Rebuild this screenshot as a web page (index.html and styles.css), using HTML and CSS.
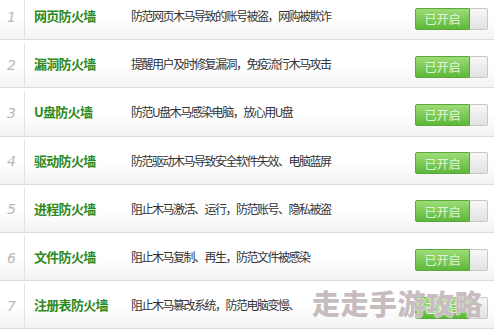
FILE: index.html
```html
<!DOCTYPE html>
<html lang="zh-CN">
<head>
    <meta charset="UTF-8">
    <title>防火墙</title>
    <link rel="stylesheet" href="styles.css">
</head>
<body>
    <div class="list">
        <div class="row">
            <div class="num">1</div>
            <div class="name">网页防火墙</div>
            <div class="desc">防范网页木马导致的账号被盗，网购被欺诈</div>
            <div class="toggle"><span class="on">已开启</span><span class="knob"></span></div>
        </div>
        <div class="row">
            <div class="num">2</div>
            <div class="name">漏洞防火墙</div>
            <div class="desc">提醒用户及时修复漏洞，免疫流行木马攻击</div>
            <div class="toggle"><span class="on">已开启</span><span class="knob"></span></div>
        </div>
        <div class="row">
            <div class="num">3</div>
            <div class="name">U盘防火墙</div>
            <div class="desc">防范U盘木马感染电脑，放心用U盘</div>
            <div class="toggle"><span class="on">已开启</span><span class="knob"></span></div>
        </div>
        <div class="row">
            <div class="num">4</div>
            <div class="name">驱动防火墙</div>
            <div class="desc">防范驱动木马导致安全软件失效、电脑蓝屏</div>
            <div class="toggle"><span class="on">已开启</span><span class="knob"></span></div>
        </div>
        <div class="row">
            <div class="num">5</div>
            <div class="name">进程防火墙</div>
            <div class="desc">阻止木马激活、运行，防范账号、隐私被盗</div>
            <div class="toggle"><span class="on">已开启</span><span class="knob"></span></div>
        </div>
        <div class="row">
            <div class="num">6</div>
            <div class="name">文件防火墙</div>
            <div class="desc">阻止木马复制、再生，防范文件被感染</div>
            <div class="toggle"><span class="on">已开启</span><span class="knob"></span></div>
        </div>
        <div class="row">
            <div class="num">7</div>
            <div class="name">注册表防火墙</div>
            <div class="desc">阻止木马篡改系统，防范电脑变慢、</div>
            <div class="toggle"><span class="on">已开启</span><span class="knob"></span></div>
        </div>
    </div>
    <div class="watermark">走走手游攻略</div>
</body>
</html>
```

FILE: styles.css
```css
* {
    margin: 0;
    padding: 0;
    box-sizing: border-box;
}

body {
    width: 494px;
    height: 330px;
    overflow: hidden;
    background: #fff;
    font-family: "Noto Sans CJK SC", "Liberation Sans", sans-serif;
    position: relative;
}

.list {
    margin-top: -8px;
}

.row {
    display: grid;
    grid-template-columns: 25px 106px 1fr 73px;
    align-items: center;
    height: 48.2px;
    padding-right: 6px;
    border-bottom: 1px solid #dcdcdc;
    background: linear-gradient(#fff 0%, #fff 55%, #f3f3f3 100%);
}

.num {
    align-self: stretch;
    display: flex;
    align-items: center;
    padding-left: 7px;
    margin: 3px 0 1px;
    border-right: 1px solid #e2e2e2;
    font-family: "DejaVu Sans", sans-serif;
    font-style: italic;
    font-size: 14px;
    color: #b8b8b8;
}

.name {
    padding-left: 9px;
    font-size: 13px;
    font-weight: bold;
    color: #2e8a22;
    white-space: nowrap;
    letter-spacing: -0.7px;
}

.desc {
    font-size: 12px;
    color: #333;
    white-space: nowrap;
    letter-spacing: -1.5px;
}

.toggle {
    display: flex;
    height: 22px;
    margin-top: 6px;
}

.on {
    width: 55px;
    display: flex;
    align-items: center;
    justify-content: center;
    font-size: 12px;
    color: #e2f5d8;
    background: linear-gradient(#9ddc78, #5db83a);
    border: 1px solid #5aa73c;
    border-radius: 2px 0 0 2px;
}

.knob {
    flex: 1;
    background: linear-gradient(#f7f7f7, #e2e2e2);
    border: 1px solid #c8c8c8;
    border-left: none;
    border-radius: 0 2px 2px 0;
}

.watermark {
    position: absolute;
    left: 312px;
    top: 286px;
    font-size: 28px;
    font-weight: 900;
    line-height: 34px;
    color: #c7bdbf;
    letter-spacing: 0.5px;
    text-shadow: 0 0 2px #fff, 0 0 1px #fff;
    white-space: nowrap;
}
```
